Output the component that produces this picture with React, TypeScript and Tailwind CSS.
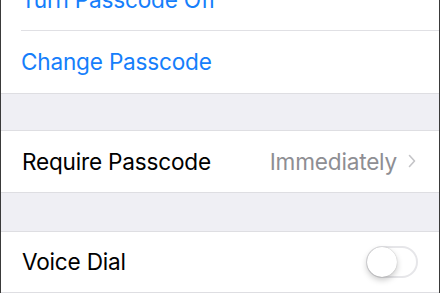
import React, { useState } from 'react';

const Chevron = () => (
  <svg width="8" height="14" viewBox="0 0 8 14" fill="none" className="ml-[11px]">
    <path d="M1.5 1.5L6.5 7L1.5 12.5" stroke="#c4c4c7" strokeWidth="1.6" strokeLinecap="round" strokeLinejoin="round" />
  </svg>
);

const Toggle = ({ on, onChange }: { on: boolean; onChange: () => void }) => (
  <button
    onClick={onChange}
    className={`relative w-[52px] h-[32px] rounded-full border-2 ${on ? 'bg-[#4cd964] border-[#4cd964]' : 'bg-white border-[#e6e6e9]'}`}
  >
    <span
      className={`absolute top-[-1px] w-[30px] h-[30px] rounded-full bg-white shadow-[0_3px_6px_rgba(0,0,0,0.22),0_0_1px_rgba(0,0,0,0.3)] ${on ? 'left-[20px]' : 'left-[-1px]'}`}
    />
  </button>
);

const App = () => {
  const [voiceDial, setVoiceDial] = useState(false);

  return (
    <div className="w-[440px] h-[293px] overflow-hidden bg-[#efeff4] border-x border-[#3a3a3a] font-['Inter','Liberation_Sans',sans-serif] text-[22.6px] tracking-[-0.2px]">
      {/* passcode actions */}
      <div className="bg-white -mt-[31px]">
        <div className="pl-[20px]">
          <div className="h-[62px] flex items-center text-[#157efb] border-b border-[#e0e0e4]">Turn Passcode Off</div>
          <div className="h-[62px] flex items-center text-[#157efb]">Change Passcode</div>
        </div>
      </div>
      <div className="h-[38px] border-y border-[#dedee2]" />

      {/* require passcode */}
      <div className="bg-white h-[61px] flex items-center justify-between pl-[21px] pr-[23px]">
        <span className="text-black">Require Passcode</span>
        <div className="flex items-center">
          <span className="text-[#8e8e93]">Immediately</span>
          <Chevron />
        </div>
      </div>
      <div className="h-[40px] border-y border-[#dedee2]" />

      {/* voice dial */}
      <div className="bg-white h-[61px] flex items-center justify-between pl-[21px] pr-[21px] border-b border-[#dedee2]">
        <span className="text-black">Voice Dial</span>
        <Toggle on={voiceDial} onChange={() => setVoiceDial(!voiceDial)} />
      </div>
    </div>
  );
};

export default App;
